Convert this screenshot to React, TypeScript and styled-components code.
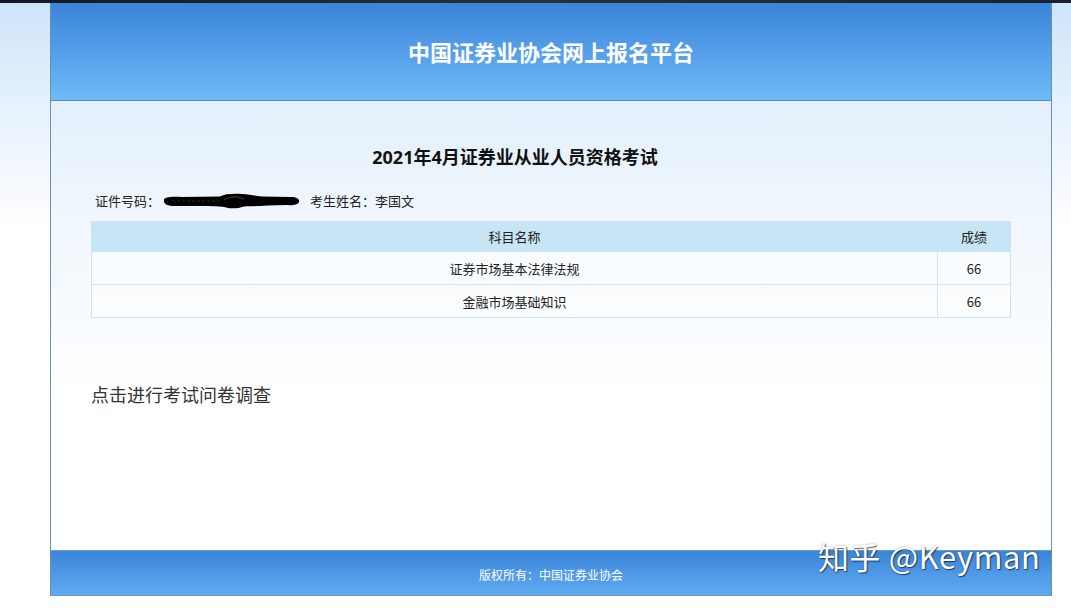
import React from 'react';
import styled, { createGlobalStyle } from 'styled-components';

const GlobalStyle = createGlobalStyle`
  html, body {
    margin: 0;
    padding: 0;
  }
  body {
    font-family: "Noto Sans", "Noto Sans CJK SC", sans-serif;
    background: linear-gradient(180deg, #cde4fa 0px, #e6f2fd 110px, #ffffff 230px) no-repeat;
    background-color: #ffffff;
    min-height: 608px;
  }
`;

const TopStrip = styled.div`
  height: 3px;
  background: linear-gradient(90deg, #121826, #2a2f3a 50%, #1b2030);
`;

const Frame = styled.div`
  position: relative;
  width: 1000px;
  margin-left: 50px;
  border-left: 1px solid #6b90a8;
  border-right: 1px solid #6b90a8;
`;

const Header = styled.header`
  height: 97px;
  display: flex;
  align-items: center;
  justify-content: center;
  background: linear-gradient(180deg, #3a84da 0%, #529ce8 45%, #6ebaf9 100%);
  border-bottom: 1px solid #5d8db0;
`;

const SiteTitle = styled.h1`
  margin: 0 0 2px;
  font-family: "Noto Sans CJK SC", sans-serif;
  font-size: 22px;
  font-weight: 700;
  color: #ffffff;
`;

const Content = styled.main`
  height: 450px;
  padding: 0 40px;
  background: linear-gradient(180deg, #e3effb 0px, #f0f7fd 120px, #ffffff 300px);
  border-bottom: 1px solid #6b9cc4;
  box-sizing: border-box;
  display: flex;
  flex-direction: column;
`;

const ExamTitle = styled.h2`
  margin: 44px 72px 0 0;
  font-family: "Noto Sans", "Noto Sans CJK SC", sans-serif;
  font-size: 18px;
  line-height: 24px;
  font-weight: 700;
  color: #111;
  text-align: center;
`;

const InfoLine = styled.div`
  margin-top: 22px;
  padding-left: 4px;
  display: flex;
  align-items: center;
  font-family: "Noto Sans CJK SC", sans-serif;
  font-size: 13px;
  line-height: 20px;
  color: #222;
`;

const Redacted = styled.svg`
  margin: 0 10px 0 2px;
`;

const ScoreTable = styled.table`
  margin-top: 10px;
  width: 100%;
  border-collapse: collapse;
  font-family: "Noto Sans CJK SC", sans-serif;
  font-size: 13px;
  color: #222;
`;

const HeadCell = styled.th<{ $w?: number }>`
  height: 29px;
  padding: 0;
  font-weight: 400;
  background: #c7e5f5;
  border: 1px solid #c7e5f5;
  width: ${(p) => (p.$w ? `${p.$w}px` : 'auto')};
`;

const Cell = styled.td`
  height: 32px;
  padding: 0;
  text-align: center;
  border: 1px solid #d2e3ec;
  background: rgba(255, 255, 255, 0.45);
`;

const SurveyLink = styled.a`
  margin-top: 64px;
  font-family: "Noto Sans CJK SC", sans-serif;
  font-size: 18px;
  line-height: 24px;
  color: #333;
  text-decoration: none;
  cursor: pointer;
`;

const Footer = styled.footer`
  height: 45px;
  display: flex;
  align-items: center;
  justify-content: center;
  padding-top: 2px;
  box-sizing: border-box;
  background: linear-gradient(180deg, #3a84d8 0%, #4e98e6 50%, #60aaf0 100%);
  border-bottom: 1px solid #6a9cc8;
`;

const FooterText = styled.span`
  font-family: "Noto Sans CJK SC", sans-serif;
  font-size: 12px;
  color: #ffffff;
`;

const Watermark = styled.div`
  position: absolute;
  left: 767px;
  top: 533px;
  font-family: "Noto Sans CJK SC", "Noto Sans", sans-serif;
  font-size: 31px;
  line-height: 40px;
  color: #ffffff;
  letter-spacing: 0.6px;
  text-shadow: 1px 1px 1px rgba(0, 0, 0, 0.55), 0 0 2px rgba(0, 0, 0, 0.35);
  pointer-events: none;
`;

const subjects = [
  { name: '证券市场基本法律法规', score: 66 },
  { name: '金融市场基础知识', score: 66 },
];

export default function App() {
  return (
    <>
      <GlobalStyle />
      <TopStrip />
      <Frame>
        <Header>
          <SiteTitle>中国证券业协会网上报名平台</SiteTitle>
        </Header>
        <Content>
          <ExamTitle>2021年4月证券业从业人员资格考试</ExamTitle>
          <InfoLine>
            证件号码：
            <Redacted width="138" height="16" viewBox="0 0 138 16">
              <path
                d="M2 8 C1 4 8 3.5 20 4 L58 3.5 C63 1 70 0.5 80 1 C88 1.5 93 3 100 3.5 L128 4 C134 3.5 138 6 137 9 C136 12 130 12.5 124 12 L106 12.5 C96 13 88 13.5 82 13.5 C76 15.5 70 16 64 14.5 C60 13 50 13.5 40 13 L14 13 C5 13 2 11 2 8 Z"
                fill="#000"
              />
              <path d="M10 8 L60 8" stroke="#444" strokeWidth="0.6" strokeDasharray="3 2" fill="none" />
              <path d="M62 7 C68 3 76 3 82 6" stroke="#555" strokeWidth="0.8" fill="none" />
            </Redacted>
            考生姓名：李国文
          </InfoLine>
          <ScoreTable>
            <thead>
              <tr>
                <HeadCell>科目名称</HeadCell>
                <HeadCell $w={72}>成绩</HeadCell>
              </tr>
            </thead>
            <tbody>
              {subjects.map((s) => (
                <tr key={s.name}>
                  <Cell>{s.name}</Cell>
                  <Cell>{s.score}</Cell>
                </tr>
              ))}
            </tbody>
          </ScoreTable>
          <SurveyLink>点击进行考试问卷调查</SurveyLink>
        </Content>
        <Footer>
          <FooterText>版权所有：中国证券业协会</FooterText>
        </Footer>
        <Watermark>知乎 @Keyman</Watermark>
      </Frame>
    </>
  );
}
